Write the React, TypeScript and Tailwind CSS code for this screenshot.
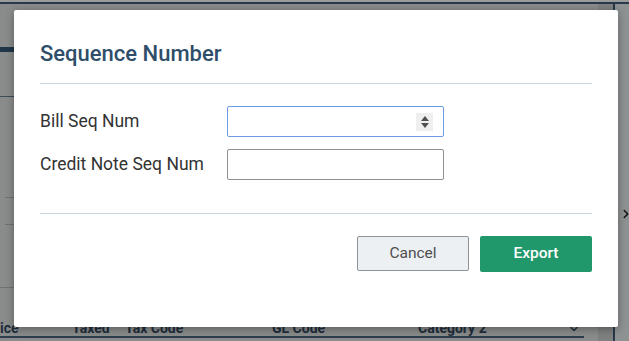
import { ChevronRight, ChevronDown } from 'lucide-react';

const font = { fontFamily: 'Roboto, "Liberation Sans", sans-serif' };

const SpinIcon = () => (
  <div className="flex h-[18px] w-[17px] flex-col items-center justify-center gap-[2px] bg-[#efefef]">
    <svg width="8" height="5" viewBox="0 0 8 5">
      <path d="M0 5 L4 0 L8 5 Z" fill="#505050" />
    </svg>
    <svg width="8" height="5" viewBox="0 0 8 5">
      <path d="M0 0 L4 5 L8 0 Z" fill="#505050" />
    </svg>
  </div>
);

const Field = ({ label, focused }: { label: string; focused?: boolean }) => (
  <div className="flex items-center">
    <label className="w-[187px] text-[17.5px] text-[#333333]">{label}</label>
    <div
      className={`flex h-[31px] w-[217px] items-center justify-end rounded-[2px] border pr-[10px] ${
        focused ? 'border-[#6d9be6]' : 'border-[#8f8f8f]'
      }`}
    >
      {focused && <SpinIcon />}
    </div>
  </div>
);

const SequenceModal = () => (
  <div className="absolute left-[14px] top-[10px] h-[317px] w-[604px] rounded-[2px] bg-white px-[26px] shadow-[0_2px_8px_rgba(0,0,0,0.35)]">
    <h2 className="pt-[31px] pb-[16px] text-[22px] font-medium leading-[26px] text-[#2f4e6a]">
      Sequence Number
    </h2>
    <div className="h-px bg-[#c9d5dc]" />
    <div className="flex flex-col gap-[12px] pt-[22px]">
      <Field label="Bill Seq Num" focused />
      <Field label="Credit Note Seq Num" />
    </div>
    <div className="mt-[33px] h-px bg-[#c9d5dc]" />
    <div className="flex justify-end gap-[11px] pt-[22px]">
      <button className="h-[35px] w-[112px] rounded-[2px] border border-[#8f9396] bg-[#edf0f3] text-[15.5px] text-[#4d4d4d]">
        Cancel
      </button>
      <button className="h-[36px] w-[112px] rounded-[2px] bg-[#21986c] text-[15.5px] font-medium text-white">
        Export
      </button>
    </div>
  </div>
);

export default function App() {
  return (
    <div className="relative h-[341px] w-[629px] overflow-hidden bg-[#8a8c8c]" style={font}>
      <div className="h-[2px] bg-[#9a9c9c]" />
      <div className="h-[2px] bg-[#27394a]" />
      <div className="flex h-[337px]">
        <div className="flex w-[14px] flex-col">
          <div className="h-[43px]" />
          <div className="h-[5px] bg-[#213649]" />
          <div className="h-[44px]" />
          <div className="h-px bg-[#3b4b58]" />
          <div className="h-[100px]" />
          <div className="ml-[5px] h-px bg-[#6f7272]" />
          <div className="h-[26px]" />
          <div className="ml-[5px] h-px bg-[#6f7272]" />
          <div className="h-[62px]" />
          <div className="h-px bg-[#6f7272]" />
        </div>
        <div className="flex-1" />
        <div className="w-[15px] bg-[#7f8181]" />
        <div className="w-[2px] bg-[#27394a]" />
        <div className="relative w-[14px] bg-[#8f9292]">
          <ChevronRight
            className="absolute left-[4px] top-[203px] text-[#111]"
            size={14}
            strokeWidth={2.5}
          />
        </div>
      </div>
      <div className="absolute bottom-[3px] left-0 h-[2px] w-[584px] bg-[#2e3e4c]" />
      <div className="absolute left-0 top-[318px] flex w-[590px] items-center whitespace-nowrap text-[14px] font-bold text-[#1e2d3b]">
        <span className="w-[72px]">ice</span>
        <span className="w-[53px]">Taxed</span>
        <span className="w-[147px]">Tax Code</span>
        <span className="w-[146px]">GL Code</span>
        <span className="w-[150px]">Category 2</span>
        <ChevronDown size={12} strokeWidth={3} />
      </div>
      <SequenceModal />
    </div>
  );
}
